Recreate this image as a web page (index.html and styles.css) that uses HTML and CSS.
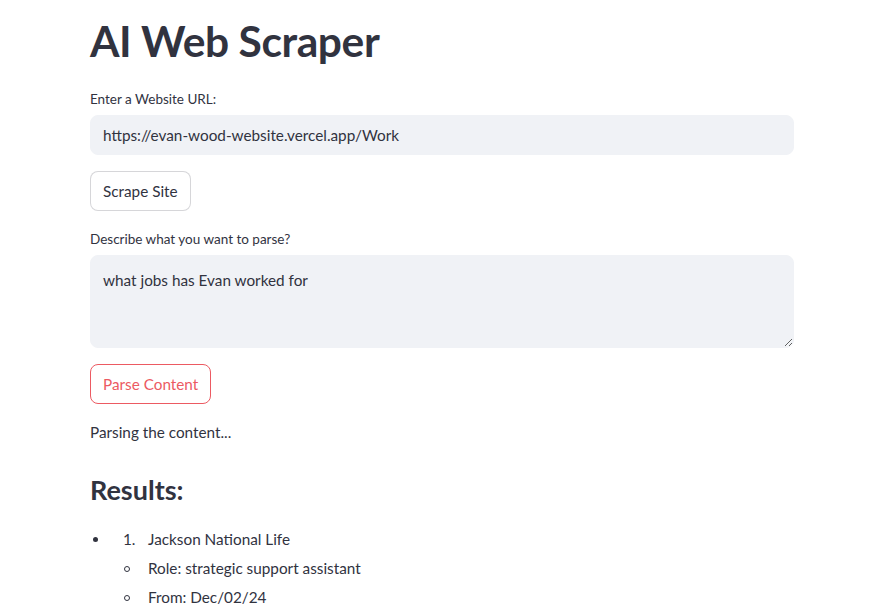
FILE: index.html
```html
<!DOCTYPE html>
<html lang="en">
<head>
<meta charset="utf-8">
<title>AI Web Scraper</title>
<link rel="stylesheet" href="styles.css">
</head>
<body>
<main class="app">
  <h1 class="title">AI Web Scraper</h1>

  <div class="field">
    <label class="field-label" for="url">Enter a Website URL:</label>
    <input id="url" class="text-input" type="text" value="https://evan-wood-website.vercel.app/Work">
  </div>

  <div class="btn-row"><button class="btn">Scrape Site</button></div>

  <div class="field">
    <label class="field-label" for="prompt">Describe what you want to parse?</label>
    <textarea id="prompt" class="text-area">what jobs has Evan worked for</textarea>
  </div>

  <div class="btn-row"><button class="btn btn-active">Parse Content</button></div>

  <p class="status">Parsing the content...</p>

  <h3 class="results-title">Results:</h3>

  <ul class="bullets">
    <li class="bullet-item">
      <span class="disc"></span>
      <ol class="jobs">
        <li class="job">
          <div class="job-row"><span class="num">1.</span><span>Jackson National Life</span></div>
          <ul class="details">
            <li class="detail"><span class="circle"></span><span>Role: strategic support assistant</span></li>
            <li class="detail"><span class="circle"></span><span>From: Dec/02/24</span></li>
          </ul>
        </li>
      </ol>
    </li>
  </ul>
</main>
</body>
</html>
```

FILE: styles.css
```css
html, body {
  margin: 0;
  padding: 0;
  background: #ffffff;
}

body {
  font-family: "Lato", "Noto Sans", sans-serif;
  color: #31333f;
  overflow: hidden;
}

.app {
  width: 704px;
  margin-left: 90px;
  display: flex;
  flex-direction: column;
  gap: 16px;
}

.title {
  margin: 15px 0 4px 0;
  font-size: 42.5px;
  font-weight: 700;
  line-height: 52px;
  letter-spacing: -0.4px;
  color: #31333f;
}

.field {
  display: flex;
  flex-direction: column;
  gap: 4px;
}

.field-label {
  font-size: 13.5px;
  line-height: 24px;
  color: #31333f;
}

.text-input,
.text-area {
  box-sizing: border-box;
  width: 100%;
  border: 1px solid #f0f2f6;
  background: #f0f2f6;
  border-radius: 8px;
  font-family: "Lato", "Noto Sans", sans-serif;
  font-size: 15.3px;
  color: #31333f;
  outline: none;
}

.text-input {
  height: 40px;
  padding: 0 12px;
}

.text-area {
  height: 93px;
  padding: 12px 12px;
  line-height: 24px;
  resize: vertical;
  display: block;
}

.btn-row {
  display: flex;
}

.btn {
  box-sizing: border-box;
  height: 40px;
  padding: 0 12px;
  background: #ffffff;
  border: 1px solid rgba(49, 51, 63, 0.2);
  border-radius: 8px;
  font-family: "Lato", "Noto Sans", sans-serif;
  font-size: 15.3px;
  color: #31333f;
}

.btn-active {
  border-color: #ec5a62;
  color: #ec5a62;
}

.status {
  margin: 0;
  font-size: 15.3px;
  line-height: 24px;
}

.results-title {
  margin: 13px 0 0 0;
  font-size: 27px;
  font-weight: 700;
  line-height: 34px;
  color: #31333f;
}

.bullets,
.jobs,
.details {
  list-style: none;
  margin: 0;
  padding: 0;
}

.bullets {
  margin-top: 4px;
}

.bullet-item {
  display: flex;
  align-items: flex-start;
  font-size: 15.3px;
  line-height: 24px;
}

.disc {
  flex: 0 0 33px;
  height: 24px;
  display: flex;
  align-items: center;
}

.disc::before {
  content: "";
  width: 5px;
  height: 5px;
  margin-left: 3px;
  margin-top: 1px;
  border-radius: 50%;
  background: #31333f;
}

.jobs {
  flex: 1;
}

.job-row {
  display: flex;
}

.num {
  flex: 0 0 25px;
}

.details {
  display: flex;
  flex-direction: column;
  gap: 5px;
  margin-top: 5px;
}

.detail {
  display: flex;
}

.circle {
  flex: 0 0 25px;
  height: 24px;
  display: flex;
  align-items: center;
}

.circle::before {
  content: "";
  box-sizing: border-box;
  width: 6px;
  height: 6px;
  margin-left: 1px;
  margin-top: 1px;
  border-radius: 50%;
  border: 1px solid #31333f;
}
```
